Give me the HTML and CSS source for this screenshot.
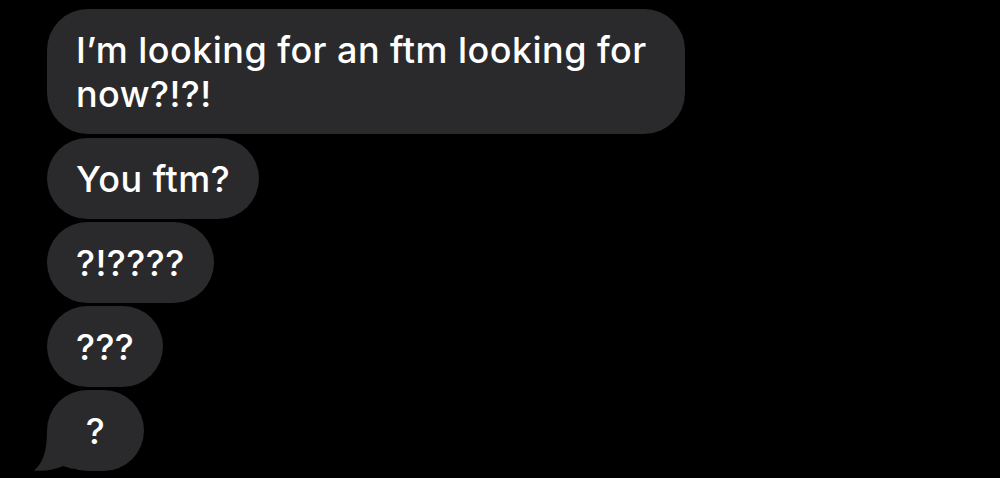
FILE: index.html
```html
<!DOCTYPE html>
<html lang="en">
<head>
    <meta charset="UTF-8">
    <meta name="viewport" content="width=device-width, initial-scale=1.0">
    <title>Messages</title>
    <link rel="stylesheet" href="styles.css">
</head>
<body>

    <div class="thread">
        <div class="bubble bubble-first">I’m looking for an ftm looking for now?!?!</div>
        <div class="bubble">You ftm?</div>
        <div class="bubble">?!????</div>
        <div class="bubble">???</div>
        <div class="bubble bubble-tail">
            <svg class="tail" width="40" height="40" viewBox="0 0 40 40">
                <path d="M14 0 C14 20 10 32 1 39.5 C12 40.5 22 38.5 30 35 L40 38 L40 0 Z"></path>
            </svg>
            <span class="bubble-text">?</span>
        </div>
    </div>

</body>
</html>
```

FILE: styles.css
```css
body {
    margin: 0;
    padding: 0;
    background-color: #000;
    font-family: Inter, "Liberation Sans", sans-serif;
    color: #fff;
}

.thread {
    display: flex;
    flex-direction: column;
    align-items: flex-start;
    gap: 3px;
    padding: 9px 0 0 47px;
}

.bubble {
    position: relative;
    box-sizing: border-box;
    max-width: 638px;
    min-width: 97px;
    padding: 18.5px 29px;
    background-color: #2a2a2c; /* dark grey bubble */
    border-radius: 41px;
    font-size: 36px;
    font-weight: 500;
    line-height: 44px;
    letter-spacing: 0.45px;
}

.bubble-first {
    margin-bottom: 1px;
}

.bubble-tail {
    text-align: center;
}

.bubble-text {
    position: relative;
}

.tail {
    position: absolute;
    left: -14px;
    bottom: 0;
    fill: #2a2a2c;
}
```
